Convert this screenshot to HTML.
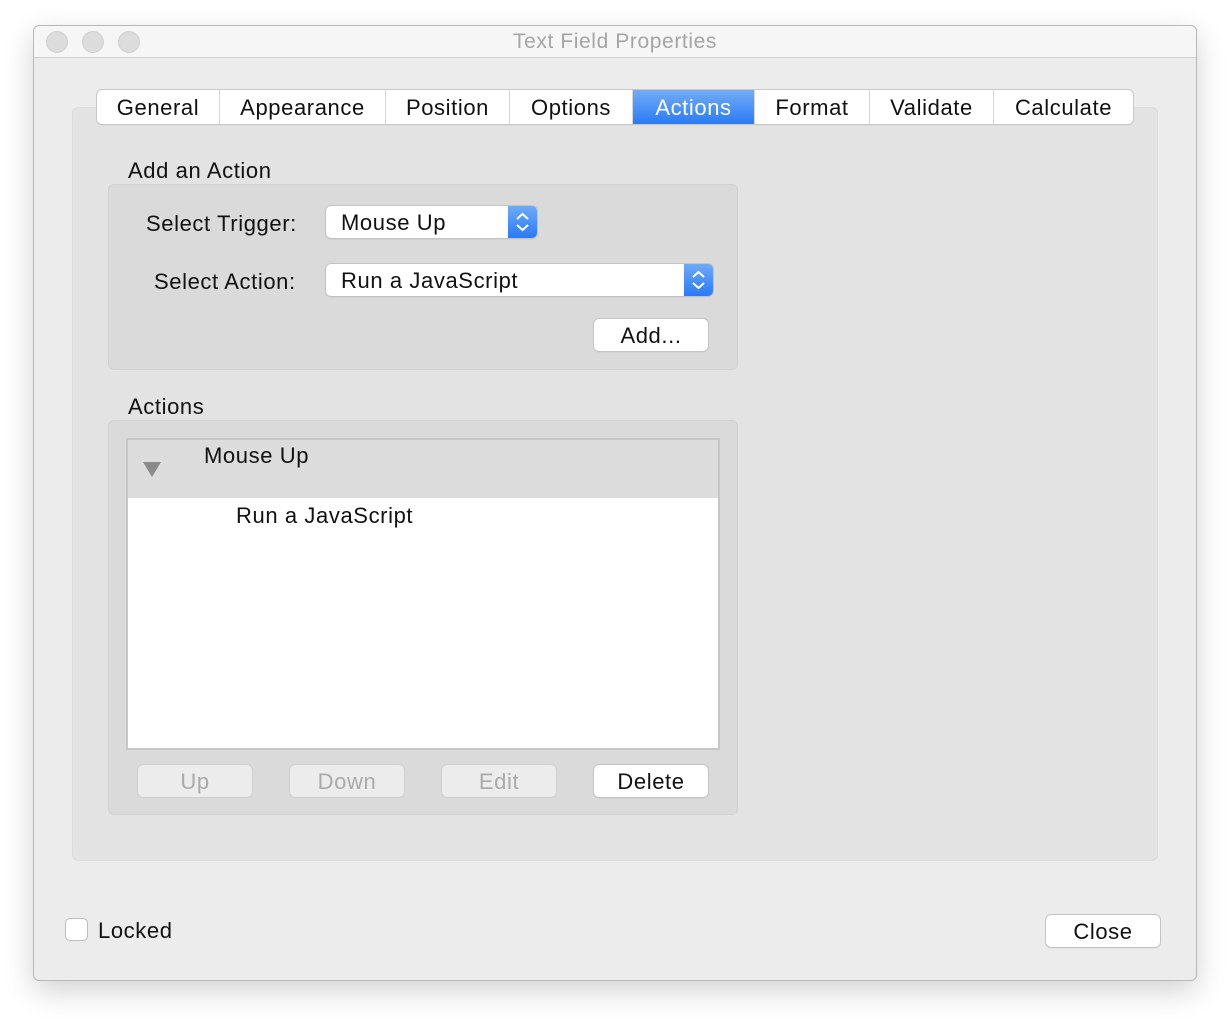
<!DOCTYPE html>
<html><head><meta charset="utf-8"><style>
*{margin:0;padding:0;box-sizing:border-box}
body{width:1230px;height:1022px;background:#fff;font-family:"Liberation Sans",sans-serif;position:relative;overflow:hidden;color:#111}
.a{position:absolute}
.win{left:33px;top:25px;width:1164px;height:956px;background:#ececec;border:1px solid #b8b8b8;border-radius:6px;box-shadow:0 10px 30px rgba(0,0,0,0.18)}
.title{left:0;top:0;width:1162px;height:32px;background:#f6f6f6;border-bottom:1px solid #d0d0d0;border-radius:6px 6px 0 0}
.dot{width:22px;height:22px;border-radius:50%;background:#dcdcdc;border:1px solid #d0d0d0;top:5px}
.t{font-size:22px;letter-spacing:0.6px;white-space:nowrap}
.tabs{left:97px;top:90px;width:1036px;height:34px;background:#fff;border-radius:5px;box-shadow:0 0 0 1px #c8c8c8,0 1px 1px rgba(0,0,0,.2);display:flex;overflow:hidden}
.tab{height:34px;line-height:35px;font-size:22px;letter-spacing:0.6px;text-align:center;border-right:1px solid #d6d6d6}
.btn{background:#fff;border-radius:5px;box-shadow:0 0 0 1px #c4c4c4,0 1px 1px rgba(0,0,0,.2);text-align:center;font-size:22px;letter-spacing:0.6px}
.dis{background:#ececec;color:#aaa;box-shadow:0 0 0 1px #cfcfcf}
.pop{background:#fff;border-radius:5px;box-shadow:0 0 0 1px #c4c4c4,0 1px 1px rgba(0,0,0,.25);font-size:22px;letter-spacing:0.6px;padding-left:15px;overflow:hidden}
.pb{position:absolute;right:0;top:0;width:29px;height:100%;background:linear-gradient(#6eaaf7,#2a7af5);}
</style></head><body>
<div class="a win">
 <div class="a title"></div>
 <div class="a dot" style="left:12px"></div>
 <div class="a dot" style="left:48px"></div>
 <div class="a dot" style="left:84px"></div>
</div>
<div class="a t" style="left:0;width:1230px;text-align:center;top:30px;color:#a5a5a5;font-size:21px">Text Field Properties</div>
<div class="a" style="left:72px;top:107px;width:1086px;height:754px;background:#e3e3e3;border-radius:6px;border:1px solid #dcdcdc"></div>
<div class="a tabs">
 <div class="tab" style="width:123px">General</div>
 <div class="tab" style="width:166px">Appearance</div>
 <div class="tab" style="width:124px">Position</div>
 <div class="tab" style="width:123px">Options</div>
 <div class="tab" style="width:122px;background:linear-gradient(#72acf7,#2b7bf5);color:#fff">Actions</div>
 <div class="tab" style="width:115px">Format</div>
 <div class="tab" style="width:124px">Validate</div>
 <div class="tab" style="width:139px;border-right:none">Calculate</div>
</div>
<div class="a t" style="left:128px;top:158px">Add an Action</div>
<div class="a" style="left:108px;top:184px;width:630px;height:186px;background:#dadada;border-radius:6px;border:1px solid #d2d2d2"></div>
<div class="a t" style="left:146px;top:211px">Select Trigger:</div>
<div class="a t" style="left:154px;top:269px">Select Action:</div>
<div class="a pop" style="left:326px;top:206px;width:211px;height:32px;line-height:33px">Mouse Up<div class="pb"><svg width="29" height="32"><path d="M9 13l5.5-5 5.5 5M9 19l5.5 5 5.5-5" fill="none" stroke="#fff" stroke-width="2"/></svg></div></div>
<div class="a pop" style="left:326px;top:264px;width:387px;height:32px;line-height:33px">Run a JavaScript<div class="pb"><svg width="29" height="32"><path d="M9 13l5.5-5 5.5 5M9 19l5.5 5 5.5-5" fill="none" stroke="#fff" stroke-width="2"/></svg></div></div>
<div class="a btn" style="left:594px;top:319px;width:114px;height:32px;line-height:33px">Add...</div>
<div class="a t" style="left:128px;top:394px">Actions</div>
<div class="a" style="left:108px;top:420px;width:630px;height:395px;background:#dadada;border-radius:6px;border:1px solid #d2d2d2"></div>
<div class="a" style="left:126px;top:438px;width:594px;height:312px;background:#fff;border:2px solid #c6c6c6"></div>
<div class="a" style="left:128px;top:440px;width:590px;height:58px;background:#dcdcdc"></div>
<svg class="a" style="left:142px;top:461px" width="20" height="16"><path d="M1 1h18l-9 15z" fill="#8a8a8a"/></svg>
<div class="a t" style="left:204px;top:443px">Mouse Up</div>
<div class="a t" style="left:236px;top:503px">Run a JavaScript</div>
<div class="a btn dis" style="left:138px;top:765px;width:114px;height:32px;line-height:33px">Up</div>
<div class="a btn dis" style="left:290px;top:765px;width:114px;height:32px;line-height:33px">Down</div>
<div class="a btn dis" style="left:442px;top:765px;width:114px;height:32px;line-height:33px">Edit</div>
<div class="a btn" style="left:594px;top:765px;width:114px;height:32px;line-height:33px">Delete</div>
<div class="a" style="left:65px;top:918px;width:23px;height:23px;background:#fff;border:1px solid #bdbdbd;border-radius:5px"></div>
<div class="a t" style="left:98px;top:918px">Locked</div>
<div class="a btn" style="left:1046px;top:915px;width:114px;height:32px;line-height:33px">Close</div>
</body></html>
